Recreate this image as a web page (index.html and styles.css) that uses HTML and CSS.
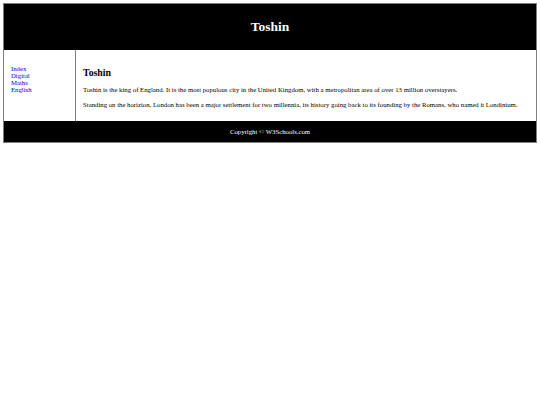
FILE: index.html
```html
<!DOCTYPE html>
<html>
<head>
<meta charset="utf-8">
<link rel="stylesheet" href="styles.css">
</head>
<body>
<div class="container">
  <header class="site-header"><h1 class="site-title">Toshin</h1></header>
  <div class="middle">
    <nav class="side-nav">
      <ul class="nav-list">
        <li><a class="nav-link" href="#">Index</a></li>
        <li><a class="nav-link" href="#">Digital</a></li>
        <li><a class="nav-link" href="#">Maths</a></li>
        <li><a class="nav-link" href="#">English</a></li>
      </ul>
    </nav>
    <article class="content">
      <h1 class="content-title">Toshin</h1>
      <p class="content-text">Toshin is the king of England. It is the most populous city in the United Kingdom, with a metropolitan area of over 13 million overstayers.</p>
      <p class="content-text">Standing on the horizion, London has been a major settlement for two millennia, its history going back to its founding by the Romans, who named it Londinium.</p>
    </article>
  </div>
  <footer class="site-footer">Copyright &copy; W3Schools.com</footer>
</div>
</body>
</html>
```
FILE: styles.css
```css
html, body { background: #fff; }
body {
  margin: 3px;
  font-family: "Liberation Serif", "Times New Roman", serif;
  font-size: 6.75px;
  color: #000;
}
.container {
  border: 1px solid gray;
  display: flex;
  flex-direction: column;
}
.site-header {
  background: #000;
  color: #fff;
  height: 46px;
  display: flex;
  align-items: center;
  justify-content: center;
}
.site-title {
  margin: 0;
  font-size: 13.5px;
  font-weight: bold;
}
.middle {
  display: flex;
}
.side-nav {
  width: 64px;
  padding: 15px 0 0 7px;
}
.nav-list {
  list-style: none;
  margin: 0;
  padding: 0;
}
.nav-link {
  color: #0000ee;
  text-decoration: none;
}
.content {
  flex: 1;
  border-left: 1px solid gray;
  padding: 17px 7px 13px 7px;
}
.content-title {
  margin: 0 0 8px 0;
  font-size: 9.8px;
  font-weight: bold;
}
.content-text {
  margin: 0 0 8px 0;
}
.content-text:last-child { margin-bottom: 0; }
.site-footer {
  background: #000;
  color: #fff;
  height: 21px;
  display: flex;
  align-items: center;
  justify-content: center;
}
```
